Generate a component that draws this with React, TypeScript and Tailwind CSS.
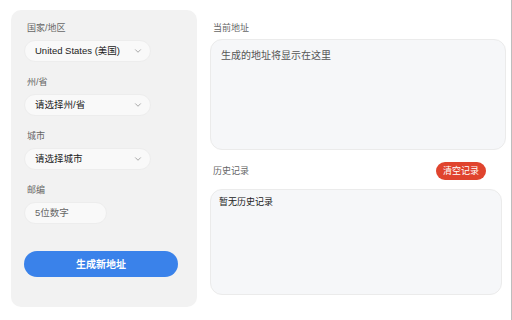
import React from 'react';
import { ChevronDown } from 'lucide-react';

const font = { fontFamily: '"Liberation Sans", "Noto Sans CJK SC", sans-serif' };

interface FieldProps {
  label: string;
  value: string;
}

const SelectField: React.FC<FieldProps> = ({ label, value }) => (
  <div className="mb-[14px]">
    <div className="h-[12px] text-[9px] leading-[12px] text-[#666] pl-[3px] mb-[6px]">{label}</div>
    <div className="flex items-center justify-between w-[127px] h-[22px] rounded-full bg-[#f9f9f9] border border-[#ededed] pl-[10px] pr-[7px]">
      <span className="text-[9.5px] leading-[12px] text-[#222]">{value}</span>
      <ChevronDown size={10} strokeWidth={1.5} className="text-[#777]" />
    </div>
  </div>
);

const App: React.FC = () => {
  return (
    <div className="w-[512px] h-[320px] bg-white flex border-r border-[#bdbdbd] overflow-hidden" style={font}>
      <div className="ml-[11px] mt-[10px] w-[186px] h-[297px] rounded-[10px] bg-[#f2f2f2] pt-[12px] px-[13px]">
        <SelectField label="国家/地区" value="United States (美国)" />
        <SelectField label="州/省" value="请选择州/省" />
        <SelectField label="城市" value="请选择城市" />
        <div>
          <div className="h-[12px] text-[9px] leading-[12px] text-[#666] pl-[3px] mb-[6px]">邮编</div>
          <div className="flex items-center w-[83px] h-[22px] rounded-full bg-[#f9f9f9] border border-[#ededed] pl-[10px]">
            <span className="text-[9.5px] leading-[12px] text-[#666]">5位数字</span>
          </div>
        </div>
        <button className="mt-[27px] w-[154px] h-[26px] rounded-full bg-[#3a82ea] text-white text-[10px] font-bold flex items-center justify-center">
          生成新地址
        </button>
      </div>

      <div className="ml-[13px] w-[296px] flex flex-col">
        <div className="mt-[22px] h-[12px] text-[9px] leading-[12px] text-[#666] pl-[3px]">当前地址</div>
        <div className="mt-[5px] h-[111px] w-[296px] rounded-[12px] bg-[#f6f7f9] border border-[#ebebeb] px-[10px] pt-[10px] text-[10px] leading-[12px] text-[#555]">
          生成的地址将显示在这里
        </div>
        <div className="mt-[12px] flex items-center justify-between w-[276px]">
          <span className="text-[9px] leading-[12px] text-[#666] pl-[3px]">历史记录</span>
          <button className="w-[50px] h-[18px] rounded-full bg-[#e0442e] text-white text-[9px] leading-[12px] flex items-center justify-center">
            清空记录
          </button>
        </div>
        <div className="mt-[9px] h-[106px] w-[292px] rounded-[12px] bg-[#f6f7f9] border border-[#ebebeb] px-[8px] pt-[6px] text-[9px] leading-[12px] text-[#222]">
          暂无历史记录
        </div>
      </div>
    </div>
  );
};

export default App;
